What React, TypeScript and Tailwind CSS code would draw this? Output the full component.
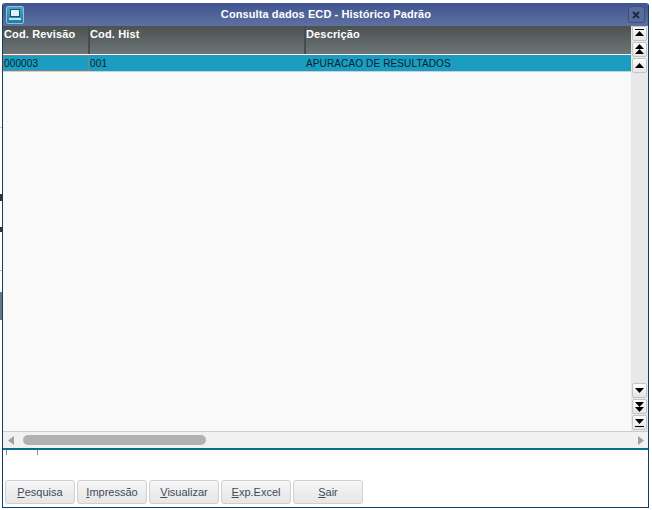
function ScrollBtn({ children }: { children: React.ReactNode }) {
  return (
    <div className="flex h-[15px] w-[15px] items-center justify-center rounded-[2px] border border-[#c4c4c4] bg-gradient-to-b from-[#fdfdfd] to-[#e4e4e4]">
      <svg width="9" height="11" viewBox="0 0 9 11" fill="#000">
        {children}
      </svg>
    </div>
  );
}

function ActionButton({ hot, rest }: { hot: string; rest: string }) {
  return (
    <div className="flex h-[24px] w-[70px] items-center justify-center rounded-[3px] border border-[#d0d0d0] bg-gradient-to-b from-[#f6f6f6] to-[#e6e6e6] text-[11px] text-[#3f4a5a]">
      <span>
        <span className="underline">{hot}</span>
        {rest}
      </span>
    </div>
  );
}

function HeaderCell({ label, width }: { label: string; width: string }) {
  return (
    <div className={`h-full shrink-0 border-r-2 border-[#474c4c] pt-[1px] text-[11px] leading-[14px] font-bold tracking-[0.15px] text-white ${width}`}>
      {label}
    </div>
  );
}

export default function App() {
  return (
    <div className="flex h-[510px] w-[652px] bg-white pt-[3px] font-['Liberation_Sans',Arial,sans-serif]">
      <div className="flex w-[2px] shrink-0 flex-col">
        <div className="mt-[124px] h-[1px] bg-[#cccccc]" />
        <div className="mt-[66px] h-[7px] bg-[#333333]" />
        <div className="mt-[26px] h-[5px] bg-[#333333]" />
        <div className="mt-[38px] h-[1px] bg-[#bbbbbb]" />
        <div className="mt-[21px] h-[28px] bg-[#6d7578]" />
      </div>
      <div className="flex h-[505px] w-[647px] shrink-0 flex-col overflow-hidden rounded-t-[3px] border-x border-b border-[#0b3f6e] bg-white">
        <div className="flex h-[23px] shrink-0 items-center justify-between bg-gradient-to-b from-[#3f5591] to-[#5f709f] pr-[3px] pl-[3px]">
          <div className="flex h-[18px] w-[18px] items-center justify-center rounded-[2px] border border-[#8cc3d6] bg-gradient-to-b from-[#4aa3c4] to-[#1d7fa3]">
            <svg width="14" height="13" viewBox="0 0 14 13">
              <rect x="2.5" y="1.5" width="9" height="7" fill="#dff2fa" stroke="#0e5a7a" />
              <rect x="1" y="10" width="12" height="2" fill="#bfe3f0" />
            </svg>
          </div>
          <div className="text-[11px] font-bold tracking-[0.1px] text-white">Consulta dados ECD - Histórico Padrão</div>
          <div className="flex h-[17px] w-[17px] items-center justify-center rounded-[3px] border border-[#3c4d82] bg-[#5a6c9e]">
            <svg width="8" height="8" viewBox="0 0 8 8" stroke="#1f2a44" strokeWidth="2">
              <path d="M1 1l6 6M7 1l-6 6" />
            </svg>
          </div>
        </div>

        <div className="flex min-h-0 flex-1">
          <div className="flex min-w-0 flex-1 flex-col bg-[#f9f9f9]">
            <div className="flex h-[28px] shrink-0 bg-gradient-to-b from-[#4c5252] to-[#6d7576] pl-[1px]">
              <HeaderCell label="Cod. Revisão" width="w-[86px]" />
              <HeaderCell label="Cod. Hist" width="w-[216px]" />
              <div className="pt-[1px] text-[11px] leading-[14px] font-bold tracking-[0.15px] text-white">Descrição</div>
            </div>
            <div className="mt-[1px] flex h-[17px] shrink-0 items-center border-b border-[#c8d2d6] bg-[#1a9dc0] text-[10px] tracking-[0.13px] text-[#06232c]">
              <div className="h-full w-[86px] border border-dotted border-[#d8703c] leading-[15px]">000003</div>
              <div className="w-[216px] pl-[1px]">001</div>
              <div className="pl-[1px]">APURACAO DE RESULTADOS</div>
            </div>
          </div>
          <div className="flex w-[17px] shrink-0 flex-col justify-between bg-[#e8e8e8] pr-[1px] pb-[1px] pl-[1px]">
            <div className="flex flex-col gap-[1px]">
              <ScrollBtn>
                <path d="M0 1h9v1H0zM4.5 3L9 8H0z" />
              </ScrollBtn>
              <ScrollBtn>
                <path d="M4.5 0L9 5H0zM4.5 5L9 10H0z" />
              </ScrollBtn>
              <ScrollBtn>
                <path d="M4.5 3L9 8H0z" />
              </ScrollBtn>
            </div>
            <div className="flex flex-col gap-[1px]">
              <ScrollBtn>
                <path d="M0 3h9L4.5 8z" />
              </ScrollBtn>
              <ScrollBtn>
                <path d="M0 1h9L4.5 6zM0 6h9L4.5 11z" />
              </ScrollBtn>
              <ScrollBtn>
                <path d="M0 2h9L4.5 7zM0 9h9v1H0z" />
              </ScrollBtn>
            </div>
          </div>
        </div>

        <div className="flex h-[17px] shrink-0 items-center border-t border-[#cccccc] bg-[#f1f1f1] pr-[4px] pl-[5px]">
          <svg width="6" height="9" viewBox="0 0 6 9" fill="#a0a0a0">
            <path d="M6 0v9L0 4.5z" />
          </svg>
          <div className="ml-[9px] h-[10px] w-[183px] rounded-[5px] bg-[#b1b1b1]" />
          <svg className="ml-auto" width="6" height="9" viewBox="0 0 6 9" fill="#a0a0a0">
            <path d="M0 0v9l6-4.5z" />
          </svg>
        </div>

        <div className="h-[2px] shrink-0 bg-[#0d6d8c]" />
        <div className="ml-[3px] h-[5px] w-[32px] shrink-0 border-x border-[#8a8a8a]" />

        <div className="mt-[25px] mb-[3px] flex gap-[2px] pl-[2px]">
          <ActionButton hot="P" rest="esquisa" />
          <ActionButton hot="I" rest="mpressão" />
          <ActionButton hot="V" rest="isualizar" />
          <ActionButton hot="E" rest="xp.Excel" />
          <ActionButton hot="S" rest="air" />
        </div>
      </div>
    </div>
  );
}
